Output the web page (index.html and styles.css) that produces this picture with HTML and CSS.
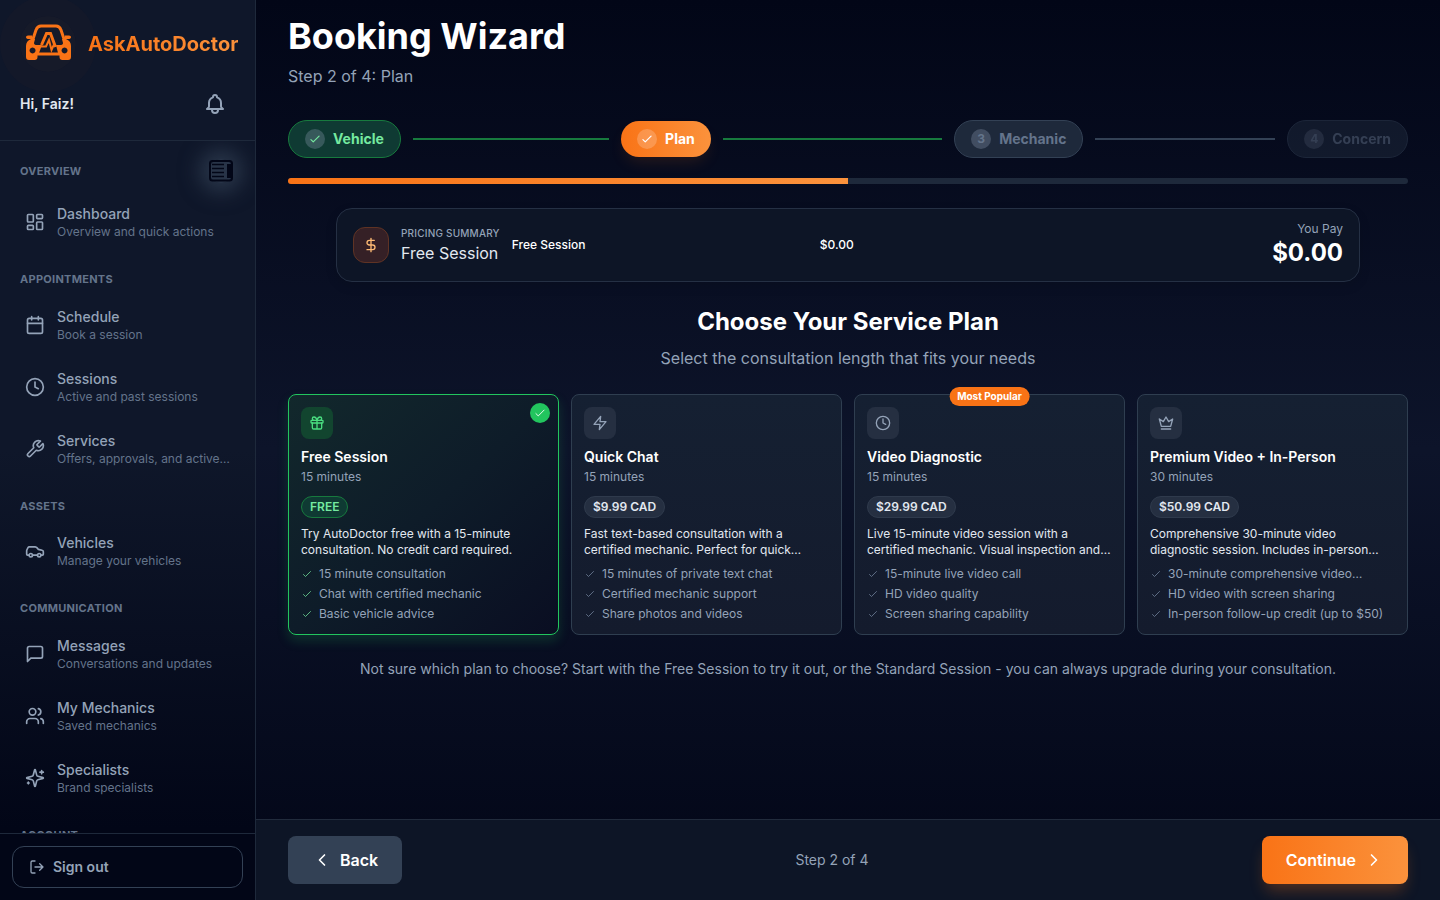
FILE: index.html
```
<!DOCTYPE html>
<html lang="en">
<head>
  <meta charset="UTF-8">
  <meta name="viewport" content="width=device-width, initial-scale=1.0">
  <title>Booking Wizard - AskAutoDoctor</title>
  <link rel="stylesheet" href="styles.css">
</head>
<body>
  <!-- shared icon shapes -->
  <svg class="sprite" aria-hidden="true">
    <symbol id="i-check" viewBox="0 0 24 24"><path d="M5 13l4 4L19 7"/></symbol>
    <symbol id="i-clock" viewBox="0 0 24 24"><circle cx="12" cy="12" r="10"/><path d="M12 6v6l4 2"/></symbol>
  </svg>

  <div class="app">
    <aside class="sidebar">
      <div class="sidebar-header">
        <a href="#" class="brand">
          <svg class="logo" viewBox="0 0 56 56" aria-hidden="true">
            <path class="logo-line" d="M12 26 L16 14 Q17.500 10 21 10 H36 Q39.500 10 41 14 L45 26"/>
            <path class="logo-fill" d="M6 21 Q6 19.500 8 19.500 H12 L12.500 23 H9 Q6 23 6 21Z M51 21 Q51 19.500 49 19.500 H45 L44.500 23 H48 Q51 23 51 21Z"/>
            <path class="logo-fill" fill-rule="evenodd" d="M11 23 H15 L14 27 Q14 29 17 29 H22 L19 37 H17.500 V41 Q17.500 44 14.500 44 H9 Q6 44 6 41 V30 Q6 25 11 23Z M12.500 31.500 a3 3 0 1 0 .1 0Z"/>
            <path class="logo-fill" fill-rule="evenodd" d="M46 23 H42 L43 27 Q43 29 40 29 H36 L38 37 H39.500 V41 Q39.500 44 42.500 44 H48 Q51 44 51 41 V30 Q51 25 46 23Z M44.500 31.500 a3 3 0 1 0 .1 0Z"/>
            <path class="logo-fill" d="M16 36.500 H41 V39.500 H16Z"/>
            <path class="logo-line" d="M21.500 29 L26.500 17.500 H30.500 L35.500 31"/>
            <path class="logo-pulse" d="M21 30.500 H26 L29 24 L31.500 34 L33.500 29.500 H36"/>
          </svg>
          <span class="brand-name">AskAutoDoctor</span>
        </a>
        <div class="greeting">
          <span>Hi, Faiz!</span>
          <button type="button" class="bell" aria-label="Notifications">
            <svg class="icon" viewBox="0 0 24 24"><path d="M15 17h5l-1.405-1.405A2.032 2.032 0 0118 14.158V11a6.002 6.002 0 00-4-5.659V5a2 2 0 10-4 0v.341C7.670 6.165 6 8.388 6 11v3.159c0 .538-.214 1.055-.595 1.436L4 17h5m6 0v1a3 3 0 11-6 0v-1m6 0H9"/></svg>
          </button>
        </div>
      </div>

      <nav class="nav">
        <section>
          <div class="nav-top">
            <h2>Overview</h2>
            <button type="button" class="collapse" aria-label="Collapse sidebar">
              <svg viewBox="0 0 24 24"><rect x="1" y="2" width="22" height="19.500" rx="2.500"/><path class="thin" d="M3 5.500H15M3 9.500H15M3 13.500H15M3 17.500H15"/><path class="solid" d="M18 5h4v14h-4z"/></svg>
            </button>
          </div>
          <a href="#" class="nav-item">
            <svg class="icon" viewBox="0 0 24 24"><rect x="3" y="3" width="7" height="9" rx="1"/><rect x="14" y="3" width="7" height="5" rx="1"/><rect x="14" y="12" width="7" height="9" rx="1"/><rect x="3" y="16" width="7" height="5" rx="1"/></svg>
            <span class="nav-text"><b>Dashboard</b><small>Overview and quick actions</small></span>
          </a>
        </section>
        <section>
          <h2>Appointments</h2>
          <a href="#" class="nav-item">
            <svg class="icon" viewBox="0 0 24 24"><path d="M8 2v4M16 2v4M3 10h18"/><rect x="3" y="4" width="18" height="18" rx="2"/></svg>
            <span class="nav-text"><b>Schedule</b><small>Book a session</small></span>
          </a>
          <a href="#" class="nav-item">
            <svg class="icon"><use href="#i-clock"/></svg>
            <span class="nav-text"><b>Sessions</b><small>Active and past sessions</small></span>
          </a>
          <a href="#" class="nav-item">
            <svg class="icon" viewBox="0 0 24 24"><path d="M14.700 6.300a1 1 0 0 0 0 1.400l1.600 1.600a1 1 0 0 0 1.400 0l3.770-3.770a6 6 0 0 1-7.940 7.940l-6.910 6.910a2.120 2.120 0 0 1-3-3l6.910-6.910a6 6 0 0 1 7.940-7.940l-3.760 3.760z"/></svg>
            <span class="nav-text"><b>Services</b><small>Offers, approvals, and active…</small></span>
          </a>
        </section>
        <section>
          <h2>Assets</h2>
          <a href="#" class="nav-item">
            <svg class="icon" viewBox="0 0 24 24"><path d="M19 17h2c.6 0 1-.4 1-1v-3c0-.9-.7-1.700-1.500-1.900C18.700 10.600 16 10 16 10s-1.300-1.400-2.200-2.300c-.5-.4-1.100-.7-1.800-.7H5c-.6 0-1.100.4-1.400.9l-1.400 2.900A3.700 3.700 0 0 0 2 12v4c0 .6.4 1 1 1h2"/><circle cx="7" cy="17" r="2"/><path d="M9 17h6"/><circle cx="17" cy="17" r="2"/></svg>
            <span class="nav-text"><b>Vehicles</b><small>Manage your vehicles</small></span>
          </a>
        </section>
        <section>
          <h2>Communication</h2>
          <a href="#" class="nav-item">
            <svg class="icon" viewBox="0 0 24 24"><path d="M21 15a2 2 0 0 1-2 2H7l-4 4V5a2 2 0 0 1 2-2h14a2 2 0 0 1 2 2z"/></svg>
            <span class="nav-text"><b>Messages</b><small>Conversations and updates</small></span>
          </a>
          <a href="#" class="nav-item">
            <svg class="icon" viewBox="0 0 24 24"><path d="M16 21v-2a4 4 0 0 0-4-4H6a4 4 0 0 0-4 4v2"/><circle cx="9" cy="7" r="4"/><path d="M22 21v-2a4 4 0 0 0-3-3.870M16 3.130a4 4 0 0 1 0 7.750"/></svg>
            <span class="nav-text"><b>My Mechanics</b><small>Saved mechanics</small></span>
          </a>
          <a href="#" class="nav-item">
            <svg class="icon" viewBox="0 0 24 24"><path d="M9.937 15.500A2 2 0 0 0 8.500 14.063l-6.135-1.582a.5.5 0 0 1 0-.962L8.500 9.936A2 2 0 0 0 9.937 8.500l1.582-6.135a.5.5 0 0 1 .963 0L14.063 8.500A2 2 0 0 0 15.500 9.937l6.135 1.581a.5.5 0 0 1 0 .964L15.500 14.063a2 2 0 0 0-1.437 1.437l-1.582 6.135a.5.5 0 0 1-.963 0zM20 3v4M22 5h-4M4 17v2M5 18H3"/></svg>
            <span class="nav-text"><b>Specialists</b><small>Brand specialists</small></span>
          </a>
        </section>
        <section>
          <h2>Account</h2>
        </section>
      </nav>

      <div class="sidebar-footer">
        <button type="button" class="sign-out">
          <svg class="icon icon-sm" viewBox="0 0 24 24"><path d="M9 21H5a2 2 0 0 1-2-2V5a2 2 0 0 1 2-2h4M16 17l5-5-5-5M21 12H9"/></svg>
          Sign out
        </button>
      </div>
    </aside>

    <main class="main">
      <div class="content">
        <header>
          <h1>Booking Wizard</h1>
          <p class="subtitle">Step 2 of 4: Plan</p>
        </header>

        <ol class="steps">
          <li class="step done">
            <button type="button" class="pill"><span class="dot"><svg class="icon"><use href="#i-check"/></svg></span>Vehicle</button>
          </li>
          <li class="step current">
            <button type="button" class="pill"><span class="dot"><svg class="icon"><use href="#i-check"/></svg></span>Plan</button>
          </li>
          <li class="step next">
            <button type="button" class="pill"><span class="dot">3</span>Mechanic</button>
          </li>
          <li class="step locked">
            <button type="button" class="pill" disabled><span class="dot">4</span>Concern</button>
          </li>
        </ol>
        <div class="progress"><div class="progress-fill" style="width: 50%"></div></div>

        <section class="pricing">
          <div class="pricing-icon">
            <svg class="icon" viewBox="0 0 24 24"><path d="M12 2v20M17 5H9.500a3.500 3.500 0 0 0 0 7h5a3.500 3.500 0 0 1 0 7H6"/></svg>
          </div>
          <div class="pricing-title">
            <p class="eyebrow">Pricing Summary</p>
            <p class="plan-name">Free Session</p>
          </div>
          <div class="pricing-line"><span>Free Session</span><span>$0.00</span></div>
          <div class="pricing-total">
            <p>You Pay</p>
            <strong>$0.00</strong>
          </div>
        </section>

        <div class="plans-head">
          <h2>Choose Your Service Plan</h2>
          <p>Select the consultation length that fits your needs</p>
        </div>

        <div class="plans">
          <article class="plan selected">
            <span class="plan-check"><svg class="icon"><use href="#i-check"/></svg></span>
            <div class="plan-icon"><svg class="icon icon-sm" viewBox="0 0 24 24"><rect x="3" y="8" width="18" height="4" rx="1"/><path d="M12 8v13M19 12v7a2 2 0 0 1-2 2H7a2 2 0 0 1-2-2v-7M7.500 8a2.500 2.500 0 0 1 0-5A4.800 8 0 0 1 12 8a4.800 8 0 0 1 4.500-5 2.500 2.500 0 0 1 0 5"/></svg></div>
            <h3>Free Session</h3>
            <p class="duration">15 minutes</p>
            <span class="price">FREE</span>
            <p class="desc">Try AutoDoctor free with a 15-minute consultation. No credit card required.</p>
            <ul>
              <li><svg class="icon"><use href="#i-check"/></svg><span>15 minute consultation</span></li>
              <li><svg class="icon"><use href="#i-check"/></svg><span>Chat with certified mechanic</span></li>
              <li><svg class="icon"><use href="#i-check"/></svg><span>Basic vehicle advice</span></li>
            </ul>
          </article>

          <article class="plan">
            <div class="plan-icon"><svg class="icon icon-sm" viewBox="0 0 24 24"><path d="M13 2 3 14h9l-1 8 10-12h-9l1-8z"/></svg></div>
            <h3>Quick Chat</h3>
            <p class="duration">15 minutes</p>
            <span class="price">$9.99 CAD</span>
            <p class="desc">Fast text-based consultation with a certified mechanic. Perfect for quick…</p>
            <ul>
              <li><svg class="icon"><use href="#i-check"/></svg><span>15 minutes of private text chat</span></li>
              <li><svg class="icon"><use href="#i-check"/></svg><span>Certified mechanic support</span></li>
              <li><svg class="icon"><use href="#i-check"/></svg><span>Share photos and videos</span></li>
            </ul>
          </article>

          <article class="plan">
            <span class="popular">Most Popular</span>
            <div class="plan-icon"><svg class="icon icon-sm"><use href="#i-clock"/></svg></div>
            <h3>Video Diagnostic</h3>
            <p class="duration">15 minutes</p>
            <span class="price">$29.99 CAD</span>
            <p class="desc">Live 15-minute video session with a certified mechanic. Visual inspection and…</p>
            <ul>
              <li><svg class="icon"><use href="#i-check"/></svg><span>15-minute live video call</span></li>
              <li><svg class="icon"><use href="#i-check"/></svg><span>HD video quality</span></li>
              <li><svg class="icon"><use href="#i-check"/></svg><span>Screen sharing capability</span></li>
            </ul>
          </article>

          <article class="plan">
            <div class="plan-icon"><svg class="icon icon-sm" viewBox="0 0 24 24"><path d="M12 3l4 7 6-4-3 11H5L2 6l6 4zM5 21h14"/></svg></div>
            <h3>Premium Video + In-Person</h3>
            <p class="duration">30 minutes</p>
            <span class="price">$50.99 CAD</span>
            <p class="desc">Comprehensive 30-minute video diagnostic session. Includes in-person…</p>
            <ul>
              <li><svg class="icon"><use href="#i-check"/></svg><span>30-minute comprehensive video…</span></li>
              <li><svg class="icon"><use href="#i-check"/></svg><span>HD video with screen sharing</span></li>
              <li><svg class="icon"><use href="#i-check"/></svg><span>In-person follow-up credit (up to $50)</span></li>
            </ul>
          </article>
        </div>

        <p class="hint">Not sure which plan to choose? Start with the Free Session to try it out, or the Standard Session - you can always upgrade during your consultation.</p>
      </div>

      <footer class="footer">
        <button type="button" class="btn btn-back">
          <svg class="icon" viewBox="0 0 24 24"><path d="M15 18l-6-6 6-6"/></svg>
          Back
        </button>
        <span class="footer-step">Step 2 of 4</span>
        <button type="button" class="btn btn-continue">
          Continue
          <svg class="icon" viewBox="0 0 24 24"><path d="M9 18l6-6-6-6"/></svg>
        </button>
      </footer>
    </main>
  </div>
</body>
</html>
```
FILE: styles.css
```
:root {
  --orange: #f97316;
  --orange-light: #fb923c;
  --green: #22c55e;
  --green-light: #75e9a0;
  --slate-950: #020617;
  --slate-900: #0f172a;
  --slate-800: #1e293b;
  --slate-700: #334155;
  --slate-500: #64748b;
  --slate-400: #94a3b8;
  --slate-200: #e2e8f0;
}

* {
  box-sizing: border-box;
}

body, h1, h2, h3, p, ul, ol {
  margin: 0;
  padding: 0;
}

body {
  font-family: Inter, "Liberation Sans", sans-serif;
  font-size: 16px;
  line-height: 24px;
  color: white;
  background: var(--slate-950);
}

ul, ol {
  list-style: none;
}

a {
  color: inherit;
  text-decoration: none;
}

button {
  font: inherit;
  color: inherit;
  background: none;
  border: none;
  padding: 0;
  cursor: pointer;
}

.sprite {
  display: none;
}

.icon {
  width: 20px;
  height: 20px;
  flex-shrink: 0;
  fill: none;
  stroke: currentColor;
  stroke-width: 2;
  stroke-linecap: round;
  stroke-linejoin: round;
}

.icon-sm {
  width: 16px;
  height: 16px;
}

.app {
  display: flex;
  height: 100vh;
}

/* Sidebar */
.sidebar {
  width: 256px;
  flex-shrink: 0;
  display: flex;
  flex-direction: column;
  background: linear-gradient(to bottom, var(--slate-900) 0%, var(--slate-900) 50%, var(--slate-950) 92%);
  border-right: 1px solid var(--slate-800);
}

.sidebar-header {
  padding: 16px 20px;
  border-bottom: 1px solid var(--slate-800);
}

.brand {
  display: flex;
  align-items: center;
  gap: 12px;
}

.logo {
  width: 56px;
  height: 56px;
  flex-shrink: 0;
  border-radius: 50%;
  background: rgba(249, 115, 22, 0.03);
  box-shadow: 0 0 0 20px rgba(249, 115, 22, 0.02);
}

.logo-line {
  fill: none;
  stroke: var(--orange);
  stroke-width: 3;
}

.logo-pulse {
  fill: none;
  stroke: var(--orange);
  stroke-width: 2;
}

.logo-fill {
  fill: var(--orange);
}

.brand-name {
  font-size: 20px;
  font-weight: 700;
  line-height: 28px;
  color: transparent;
  background: linear-gradient(to right, var(--orange), var(--orange-light));
  background-clip: text;
  -webkit-background-clip: text;
}

.greeting {
  display: flex;
  align-items: center;
  justify-content: space-between;
  margin-top: 12px;
  font-size: 14px;
  font-weight: 600;
  color: var(--slate-200);
}

.bell {
  display: flex;
  padding: 8px;
  color: var(--slate-400);
}

.bell .icon {
  width: 24px;
  height: 24px;
}

.nav {
  flex: 1;
  min-height: 0;
  overflow: hidden;
  padding: 16px 12px 0;
}

.nav section {
  margin-bottom: 18px;
}

.nav h2 {
  padding: 0 8px;
  margin-bottom: 6px;
  font-size: 11px;
  font-weight: 700;
  line-height: 1.5;
  letter-spacing: 0.025em;
  text-transform: uppercase;
  color: var(--slate-500);
}

.nav-top {
  display: flex;
  align-items: center;
  justify-content: space-between;
  height: 28px;
  margin-bottom: 6px;
  padding-right: 10px;
}

.nav-top h2 {
  margin: 0;
}

.collapse {
  display: flex;
  border-radius: 12px;
  background: rgba(51, 65, 85, 0.7);
  box-shadow: 0 0 20px 10px rgba(51, 65, 85, 0.7);
}

.collapse svg {
  width: 24px;
  height: 24px;
  fill: none;
  stroke: var(--slate-950);
  stroke-width: 2;
}

.collapse .thin {
  stroke-width: 1.5;
}

.collapse .solid {
  fill: var(--slate-950);
  stroke: none;
}

.nav-item {
  display: flex;
  align-items: center;
  gap: 12px;
  padding: 12px;
  border: 1px solid transparent;
  border-radius: 12px;
  color: var(--slate-400);
}

.nav-text {
  min-width: 0;
}

.nav-text b {
  display: block;
  font-size: 14px;
  font-weight: 500;
  line-height: 20px;
}

.nav-text small {
  display: block;
  font-size: 12px;
  line-height: 16px;
  white-space: nowrap;
  color: var(--slate-500);
}

.sidebar-footer {
  padding: 12px;
  background: var(--slate-950);
  border-top: 1px solid var(--slate-800);
}

.sign-out {
  display: flex;
  align-items: center;
  gap: 8px;
  width: 100%;
  padding: 10px 16px;
  border: 1px solid var(--slate-700);
  border-radius: 12px;
  font-size: 14px;
  font-weight: 600;
  line-height: 20px;
  color: var(--slate-400);
}

/* Main column */
.main {
  flex: 1;
  min-width: 0;
  display: flex;
  flex-direction: column;
  background: linear-gradient(to bottom, var(--slate-950), #0d142a 50%, var(--slate-950));
}

.content {
  flex: 1;
  min-height: 0;
  padding: 16px 32px;
  overflow: hidden;
}

h1 {
  font-size: 36px;
  font-weight: 700;
  line-height: 40px;
}

.subtitle {
  margin-top: 8px;
  color: var(--slate-400);
}

.steps {
  display: flex;
  align-items: center;
  margin-top: 32px;
}

.step {
  flex: 1;
  display: flex;
  align-items: center;
}

.step:last-child {
  flex: none;
}

.step:not(:last-child)::after {
  content: "";
  flex: 1;
  height: 2px;
  margin: 0 12px;
  background: var(--slate-700);
}

.step.done::after,
.step.current::after {
  background: #177a3e;
}

.pill {
  display: flex;
  align-items: center;
  gap: 8px;
  padding: 8px 16px;
  border: 1px solid var(--slate-700);
  border-radius: 24px;
  font-size: 14px;
  font-weight: 700;
  line-height: 20px;
  color: var(--slate-500);
  background: var(--slate-800);
}

.dot {
  display: flex;
  align-items: center;
  justify-content: center;
  width: 20px;
  height: 20px;
  border-radius: 50%;
  font-size: 12px;
  background: rgba(148, 163, 184, 0.3);
}

.dot .icon {
  width: 14px;
  height: 14px;
}

.done .pill {
  color: var(--green-light);
  border-color: #177a3e;
  background: #0f3a33;
}

.current .pill {
  border: none;
  color: white;
  background: linear-gradient(to right, var(--orange), var(--orange-light));
  box-shadow: 0 8px 16px -4px rgba(249, 115, 22, 0.15);
}

.current .dot {
  background: rgba(255, 255, 255, 0.2);
}

.locked .pill {
  opacity: 0.5;
  cursor: default;
}

.progress {
  height: 6px;
  margin-top: 20px;
  overflow: hidden;
  border-radius: 3px;
  background: var(--slate-800);
}

.progress-fill {
  height: 100%;
  background: linear-gradient(to right, var(--orange), var(--orange-light));
}

.pricing {
  display: flex;
  align-items: center;
  gap: 12px;
  max-width: 1024px;
  margin: 24px auto 0;
  padding: 12px 16px;
  border: 1px solid #253044;
  border-radius: 16px;
  background: #0d1526;
  box-shadow: 0 4px 12px rgba(0, 0, 0, 0.1);
}

.pricing-icon {
  display: flex;
  align-items: center;
  justify-content: center;
  width: 36px;
  height: 36px;
  border: 1px solid #5f3324;
  border-radius: 12px;
  color: #fdba74;
  background: #352026;
}

.pricing-icon .icon {
  width: 16px;
  height: 16px;
}

.eyebrow {
  font-size: 10px;
  font-weight: 500;
  line-height: 16px;
  letter-spacing: 0.02em;
  text-transform: uppercase;
  color: var(--slate-400);
}

.plan-name {
  color: var(--slate-200);
}

.pricing-line {
  flex: 1;
  display: flex;
  justify-content: space-between;
  max-width: 342px;
  font-size: 12px;
  font-weight: 500;
  line-height: 16px;
}

.pricing-total {
  margin-left: auto;
  text-align: right;
}

.pricing-total p {
  font-size: 12px;
  line-height: 16px;
  color: var(--slate-400);
}

.pricing-total strong {
  display: block;
  font-size: 24px;
  font-weight: 700;
  line-height: 32px;
}

.plans-head {
  margin: 24px 0;
  text-align: center;
}

.plans-head h2 {
  font-size: 24px;
  font-weight: 700;
  line-height: 32px;
}

.plans-head p {
  margin-top: 8px;
  color: var(--slate-400);
}

.plans {
  display: grid;
  grid-template-columns: repeat(4, 1fr);
  gap: 12px;
}

.plan {
  position: relative;
  min-width: 0;
  padding: 12px;
  border: 1px solid #2f3e50;
  border-radius: 8px;
  font-size: 12px;
  line-height: 16px;
  background: linear-gradient(to bottom, #152032, #141b2d);
}

.plan.selected {
  border-color: var(--green);
  background: linear-gradient(to bottom right, #12282c, #0e1c29 50%, #0a0e22);
  box-shadow: 0 6px 12px rgba(34, 197, 94, 0.18);
}

.plan-icon {
  display: flex;
  align-items: center;
  justify-content: center;
  width: 32px;
  height: 32px;
  border-radius: 8px;
  color: var(--slate-400);
  background: #252f41;
}

.selected .plan-icon {
  color: #4ade80;
  background: #12452f;
}

.plan-check {
  position: absolute;
  top: 8px;
  right: 8px;
  display: flex;
  align-items: center;
  justify-content: center;
  width: 20px;
  height: 20px;
  border-radius: 50%;
  background: var(--green);
}

.plan-check .icon {
  width: 14px;
  height: 14px;
  stroke-width: 1.5;
}

.popular {
  position: absolute;
  top: -8px;
  left: 50%;
  transform: translateX(-50%);
  padding: 2px 8px;
  border-radius: 10px;
  font-size: 10px;
  font-weight: 700;
  line-height: 15px;
  white-space: nowrap;
  background: var(--orange);
}

.plan h3 {
  margin-top: 8px;
  font-size: 14px;
  font-weight: 600;
  line-height: 20px;
}

.duration {
  margin-top: 2px;
  color: var(--slate-400);
}

.price {
  display: block;
  width: fit-content;
  margin-top: 11px;
  padding: 2px 8px;
  border: 1px solid #2f3a4c;
  border-radius: 12px;
  font-weight: 600;
  color: var(--slate-200);
  background: #252f41;
}

.selected .price {
  color: var(--green-light);
  border-color: #177a3e;
  background: #0f3a33;
}

.desc {
  margin-top: 8px;
  color: var(--slate-200);
}

.plan ul {
  display: grid;
  gap: 4px;
  margin-top: 8px;
}

.plan li {
  display: flex;
  align-items: center;
  gap: 6px;
  color: var(--slate-400);
}

.plan li .icon {
  width: 12px;
  height: 12px;
  stroke-width: 1.5;
  color: #7687a0;
}

.selected li .icon {
  color: var(--green-light);
}

.hint {
  margin-top: 24px;
  font-size: 14px;
  line-height: 20px;
  text-align: center;
  color: var(--slate-400);
}

/* Bottom bar */
.footer {
  display: flex;
  align-items: center;
  justify-content: space-between;
  padding: 16px 32px;
  border-top: 1px solid #212b3c;
  background: #0d1526;
}

.footer-step {
  font-size: 14px;
  line-height: 20px;
  color: var(--slate-400);
}

.btn {
  display: flex;
  align-items: center;
  gap: 8px;
  padding: 12px 24px;
  border-radius: 8px;
  font-weight: 600;
}

.btn-back {
  background: var(--slate-700);
}

.btn-continue {
  background: linear-gradient(to right, var(--orange), var(--orange-light));
  box-shadow: 0 10px 16px -4px rgba(249, 115, 22, 0.3);
}
```
